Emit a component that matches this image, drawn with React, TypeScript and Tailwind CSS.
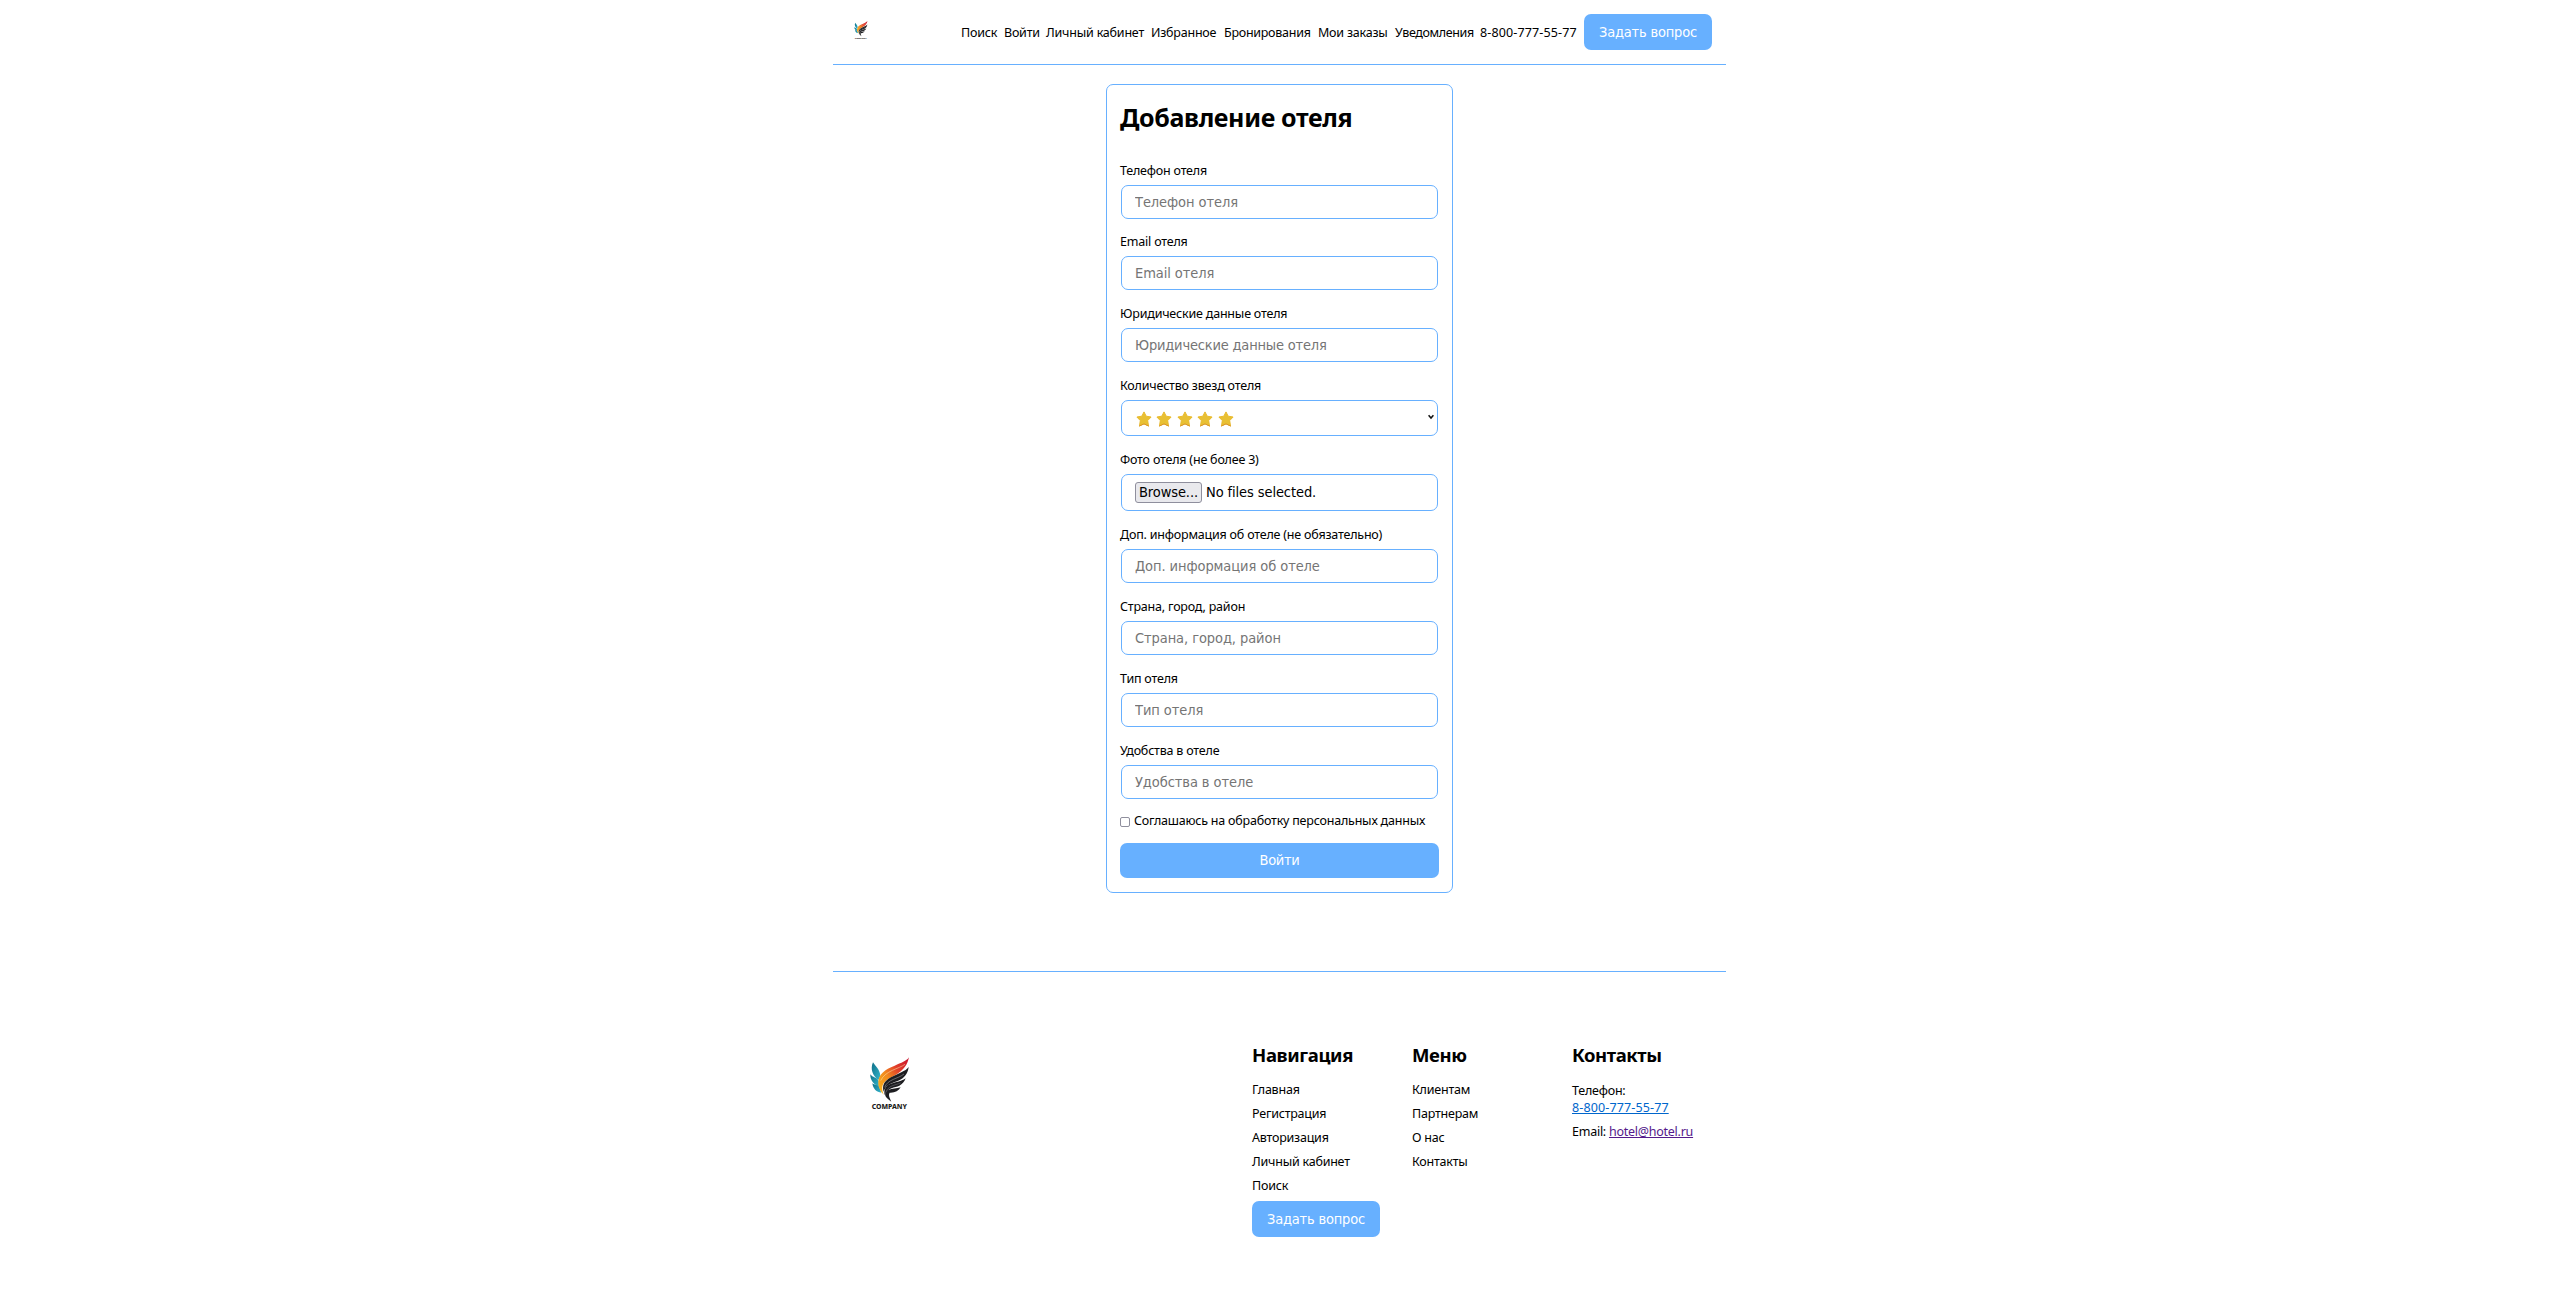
import type { ReactNode } from "react";

const NAV = [
  { label: "Поиск", box: "w-[43px] tracking-[-0.22px]" },
  { label: "Войти", box: "w-[42px] tracking-[-0.22px]" },
  { label: "Личный кабинет", box: "w-[105px] tracking-[-0.2px]" },
  { label: "Избранное", box: "w-[73px] tracking-[-0.22px]" },
  { label: "Бронирования", box: "w-[94px] tracking-[-0.27px]" },
  { label: "Мои заказы", box: "w-[77px] tracking-[-0.22px]" },
  { label: "Уведомления", box: "w-[85px] tracking-[-0.37px]" },
  { label: "8-800-777-55-77", box: "w-[104px] tracking-[0.13px]" },
];

function Logo({ className }: { className: string }) {
  return (
    <svg viewBox="60 35 120 159" className={className} aria-label="Company">
      <defs>
        <linearGradient id="flame" x1="0" y1="1" x2="1" y2="0">
          <stop offset="0" stopColor="#f9b91c" />
          <stop offset="0.4" stopColor="#f28a1e" />
          <stop offset="0.65" stopColor="#e2412a" />
          <stop offset="1" stopColor="#c8102e" />
        </linearGradient>
        <linearGradient id="ocean" x1="0" y1="0" x2="1" y2="1">
          <stop offset="0" stopColor="#0e6f88" />
          <stop offset="1" stopColor="#34b6cc" />
        </linearGradient>
      </defs>
      <g fill="url(#ocean)">
        <path d="M69 51 C75 62 91 72 91 93 L85 104 C68 91 60 72 69 51Z" />
        <path d="M61 87 C67 97 82 96 86 107 L87 124 C72 118 60 105 61 87Z" />
        <path d="M67 114 C74 120 84 118 88 125 L94 142 C80 141 69 131 67 114Z" />
      </g>
      <path
        d="M177 36 C169 48 154 52 134 61 C104 73 86 86 85 110 C84 124 91 138 101 148 C92 124 98 113 112 103 C132 90 168 80 177 36Z"
        fill="url(#flame)"
      />
      <path d="M165 57 C148 70 105 76 92 106" fill="none" stroke="#fde3b0" strokeWidth="1.6" />
      <g fill="#1d1d20">
        <path d="M176 65 C167 78 144 84 123 96 C101 108 96 122 101 139 C108 115 130 113 148 105 C162 98 174 84 176 65Z" />
        <path d="M167 99 C157 108 137 110 121 116 C106 122 101 134 104 149 C114 126 134 127 148 121 C157 116 164 109 167 99Z" />
        <path d="M152 126 C140 130 127 129 115 134 C104 140 103 150 110 157 C114 162 119 164 124 169 C120 159 114 149 119 142 C134 143 146 137 152 126Z" />
      </g>
      <path d="M162 86 C144 101 113 101 104 126" fill="none" stroke="#b5b5b9" strokeWidth="1.5" />
      <path d="M152 113 C135 120 114 120 107 142" fill="none" stroke="#8f8f94" strokeWidth="1.3" />
      <text
        x="65"
        y="191"
        textLength="106"
        lengthAdjust="spacingAndGlyphs"
        fontFamily="Noto Sans, sans-serif"
        fontWeight="800"
        fontSize="20"
        fill="#1d1d20"
      >
        COMPANY
      </text>
    </svg>
  );
}

function AskButton() {
  return (
    <button className="flex h-9 w-32 items-center justify-center whitespace-nowrap rounded-[7px] bg-[#67b0ff] pt-px font-['DejaVu_Sans_Condensed',sans-serif] text-[14.5px] tracking-[-0.19px] text-white">
      Задать вопрос
    </button>
  );
}

const FRAME = "ml-px mt-1.5 flex w-[317px] items-center rounded-[7px] border border-[#67b0ff] bg-white";
const CONTROL = "font-['DejaVu_Sans_Condensed',sans-serif] text-[14.5px] whitespace-nowrap";

function Label({ children }: { children: string }) {
  return <div className="h-[17px] whitespace-nowrap leading-[17px] tracking-[-0.2px]">{children}</div>;
}

function TextField({ label, hint, track = "tracking-[-0.08px]" }: { label: string; hint?: string; track?: string }) {
  return (
    <div>
      <Label>{label}</Label>
      <div className={FRAME}>
        <input
          placeholder={hint ?? label}
          className={`h-8 w-full bg-transparent px-[13px] outline-none placeholder:text-[#757575] placeholder:opacity-100 ${CONTROL} ${track}`}
        />
      </div>
    </div>
  );
}

function Star() {
  return (
    <svg viewBox="0 0 16 16" className="h-4 w-4 shrink-0">
      <path
        d="M8 .9 10.2 5.2 15.1 6 11.7 9.6 12.5 14.9 8 12.8 3.5 14.9 4.3 9.6.9 6 5.8 5.2Z"
        fill="#e8c033"
        stroke="#e9b92d"
        strokeWidth="1"
        strokeLinejoin="round"
      />
      <path d="M3.5 15 8 12.9 12.5 15" fill="none" stroke="#d9952a" strokeWidth="1" strokeLinecap="round" />
    </svg>
  );
}

function LinkColumn({ title, items, children }: { title: string; items: string[]; children?: ReactNode }) {
  return (
    <div className="w-40">
      <h2 className="h-[26px] text-[18.5px] font-bold leading-[26px] tracking-[-0.36px]">{title}</h2>
      <ul className="mt-2.5">
        {items.map((item) => (
          <li key={item} className="h-6 leading-6 tracking-[-0.22px]">
            {item}
          </li>
        ))}
      </ul>
      {children}
    </div>
  );
}

export default function App() {
  return (
    <div className="min-h-[1306px] bg-white font-['Noto_Sans',sans-serif] text-[12.5px] text-black">
      <div className="ml-[833px] w-[893px]">
        <header className="flex h-[65px] items-start border-b border-[#67b0ff] pt-3.5 pl-[21px]">
          <Logo className="mt-[7px] h-[18px] w-3.5" />
          <nav className="ml-[93px] flex h-9 items-center whitespace-nowrap">
            {NAV.map((item) => (
              <a key={item.label} className={`leading-[17px] ${item.box}`}>
                {item.label}
              </a>
            ))}
          </nav>
          <AskButton />
        </header>

        <form className="ml-[273px] mt-[19px] h-[809px] w-[347px] rounded-[7px] border border-[#67b0ff] px-[13px]">
          <h1 className="mt-3.5 h-9 whitespace-nowrap text-[25px] font-bold leading-9 tracking-[-0.34px]">
            Добавление отеля
          </h1>
          <div className="mt-[27px] flex flex-col gap-[15px]">
            <div className="-mb-px">
              <TextField label="Телефон отеля" />
            </div>
            <TextField label="Email отеля" />
            <TextField label="Юридические данные отеля" track="tracking-[-0.19px]" />
            <div>
              <Label>Количество звезд отеля</Label>
              <div className={`h-9 justify-between pl-[14px] pr-[9px] ${FRAME}`}>
                <div className="flex gap-[4.4px] pt-px">
                  <Star />
                  <Star />
                  <Star />
                  <Star />
                  <Star />
                </div>
                <svg viewBox="0 0 6 6" className="mr-[-6px] mb-0.5 h-1.5 w-1.5">
                  <path d="M.6 1.2 3 4 5.4 1.2" fill="none" stroke="#111" strokeWidth="1.5" />
                </svg>
              </div>
            </div>
            <div>
              <Label>Фото отеля (не более 3)</Label>
              <div className={`h-[37px] px-[13px] ${FRAME}`}>
                <button
                  type="button"
                  className={`mr-1 flex h-[21px] w-[67px] items-center justify-center rounded-[3px] border border-[#8f8f9d] bg-[#e9e9ed] pt-px tracking-[-0.1px] ${CONTROL}`}
                >
                  Browse...
                </button>
                <span className={`pt-px tracking-[-0.1px] ${CONTROL}`}>No files selected.</span>
              </div>
            </div>
            <TextField label="Доп. информация об отеле (не обязательно)" hint="Доп. информация об отеле" />
            <TextField label="Страна, город, район" />
            <TextField label="Тип отеля" />
            <TextField label="Удобства в отеле" />
          </div>
          <label className="mt-[14px] flex h-[17px] items-center whitespace-nowrap tracking-[-0.21px]">
            <span className="mr-1 h-2.5 w-2.5 shrink-0 rounded-[2px] border border-[#8f8f9d] bg-white" />
            Соглашаюсь на обработку персональных данных
          </label>
          <button
            type="button"
            className={`mt-[13px] flex h-[35px] w-[319px] items-center justify-center rounded-[7px] bg-[#67b0ff] tracking-[-0.3px] text-white ${CONTROL}`}
          >
            Войти
          </button>
        </form>

        <footer className="mt-[78px] flex border-t border-[#67b0ff] pt-[70px]">
          <Logo className="ml-[37px] mt-[15px] h-[53px] w-10" />
          <div className="ml-[342px] flex">
            <LinkColumn title="Навигация" items={["Главная", "Регистрация", "Авторизация", "Личный кабинет", "Поиск"]}>
              <div className="mt-[3px]">
                <AskButton />
              </div>
            </LinkColumn>
            <LinkColumn title="Меню" items={["Клиентам", "Партнерам", "О нас", "Контакты"]} />
            <div className="w-[154px] whitespace-nowrap">
              <h2 className="h-[26px] text-[18.5px] font-bold leading-[26px] tracking-[-0.42px]">Контакты</h2>
              <p className="mt-3.5 leading-[17px] tracking-[-0.22px]">
                Телефон:
                <br />
                <a className="tracking-[0.13px] text-[#0066cc] underline">8-800-777-55-77</a>
              </p>
              <p className="mt-[7px] leading-[17px] tracking-[-0.25px]">
                Email: <a className="text-[#551a8b] underline">hotel@hotel.ru</a>
              </p>
            </div>
          </div>
        </footer>
      </div>
    </div>
  );
}
